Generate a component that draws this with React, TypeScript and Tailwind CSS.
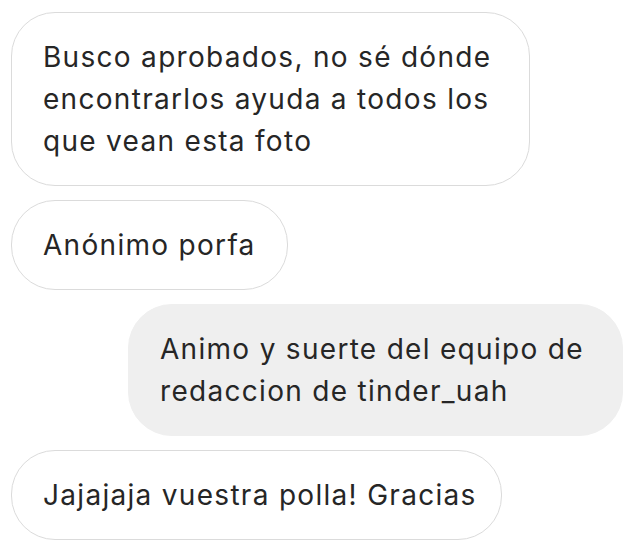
const FONT = "font-['Inter','Liberation_Sans',Arial,sans-serif]";

type Msg = { lines: string[]; mine?: boolean; width: string };

const MESSAGES: Msg[] = [
  {
    lines: ["Busco aprobados, no sé dónde", "encontrarlos ayuda a todos los", "que vean esta foto"],
    width: "w-[519px]",
  },
  { lines: ["Anónimo porfa"], width: "w-[277px]" },
  {
    lines: ["Animo y suerte del equipo de", "redaccion de tinder_uah"],
    mine: true,
    width: "w-[495px]",
  },
  { lines: ["Jajajaja vuestra polla! Gracias"], width: "w-[491px]" },
];

function Bubble({ msg }: { msg: Msg }) {
  return (
    <div
      className={`${msg.width} rounded-[44px] border px-[31px] py-[23px] text-[28px] leading-[42px] tracking-[1.3px] text-[#262626] whitespace-nowrap ${
        msg.mine ? "self-end bg-[#efefef] border-[#efefef]" : "self-start bg-white border-[#dbdbdb]"
      }`}
    >
      {msg.lines.map((l, i) => (
        <div key={i}>{l}</div>
      ))}
    </div>
  );
}

export default function App() {
  return (
    <div className={`w-[633px] h-[547px] bg-white pl-[11px] pr-[10px] pt-[12px] flex flex-col gap-[14px] ${FONT}`}>
      {MESSAGES.map((m, i) => (
        <Bubble key={i} msg={m} />
      ))}
    </div>
  );
}
